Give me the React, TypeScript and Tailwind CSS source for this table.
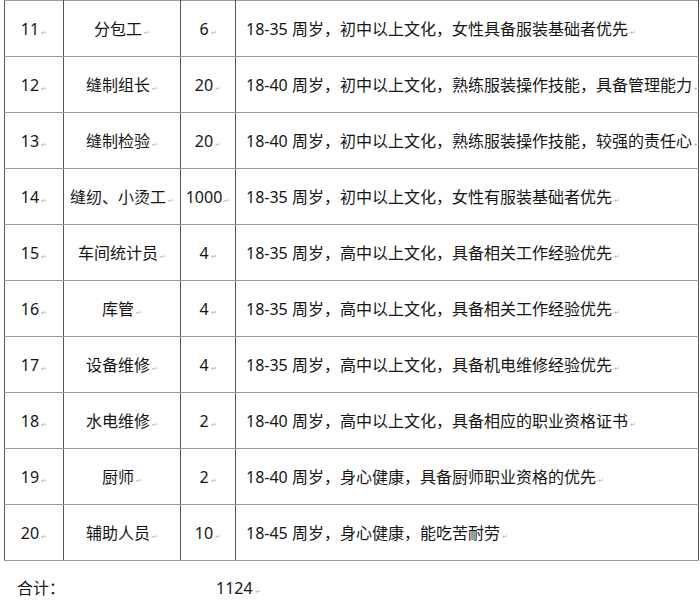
import React from "react";

const rows: [string, string, string, string][] = [
  ["11", "分包工", "6", "18-35 周岁，初中以上文化，女性具备服装基础者优先"],
  ["12", "缝制组长", "20", "18-40 周岁，初中以上文化，熟练服装操作技能，具备管理能力"],
  ["13", "缝制检验", "20", "18-40 周岁，初中以上文化，熟练服装操作技能，较强的责任心"],
  ["14", "缝纫、小烫工", "1000", "18-35 周岁，初中以上文化，女性有服装基础者优先"],
  ["15", "车间统计员", "4", "18-35 周岁，高中以上文化，具备相关工作经验优先"],
  ["16", "库管", "4", "18-35 周岁，高中以上文化，具备相关工作经验优先"],
  ["17", "设备维修", "4", "18-35 周岁，高中以上文化，具备机电维修经验优先"],
  ["18", "水电维修", "2", "18-40 周岁，高中以上文化，具备相应的职业资格证书"],
  ["19", "厨师", "2", "18-40 周岁，身心健康，具备厨师职业资格的优先"],
  ["20", "辅助人员", "10", "18-45 周岁，身心健康，能吃苦耐劳"],
];

const Mark = () => (
  <span className="ml-[2px] align-baseline text-[7px] leading-none text-[#b0b0b0]">↵</span>
);

export default function App() {
  return (
    <div
      className="w-[700px] h-[600px] overflow-hidden bg-white text-[#151515]"
      style={{ fontFamily: '"Noto Sans", "Noto Sans CJK SC", sans-serif' }}
    >
      <div className="pl-[4px]">
        <table className="table-fixed border-collapse w-[694px] text-[16px]">
          <colgroup>
            <col className="w-[59px]" />
            <col className="w-[117px]" />
            <col className="w-[55px]" />
            <col className="w-[463px]" />
          </colgroup>
          <tbody>
            {rows.map((r) => (
              <tr key={r[0]} className="h-[56px]">
                <td className="border-y border-y-[#9a9a9a] border-x border-x-[#555] text-center p-0 whitespace-nowrap">
                  {r[0]}
                  <Mark />
                </td>
                <td className="border-y border-y-[#9a9a9a] border-x border-x-[#555] text-center p-0 whitespace-nowrap">
                  {r[1]}
                  <Mark />
                </td>
                <td className="border-y border-y-[#9a9a9a] border-x border-x-[#555] text-center p-0 whitespace-nowrap">
                  {r[2]}
                  <Mark />
                </td>
                <td className="border-y border-y-[#9a9a9a] border-x border-x-[#555] text-left pl-[10px] p-0 whitespace-nowrap">
                  {r[3]}
                  <Mark />
                </td>
              </tr>
            ))}
          </tbody>
        </table>
      </div>
      <div className="flex items-center mt-[17px] text-[16px] leading-[20px]">
        <span className="ml-[17px] w-[199px]">合计：</span>
        <span>
          1124
          <Mark />
        </span>
      </div>
    </div>
  );
}
